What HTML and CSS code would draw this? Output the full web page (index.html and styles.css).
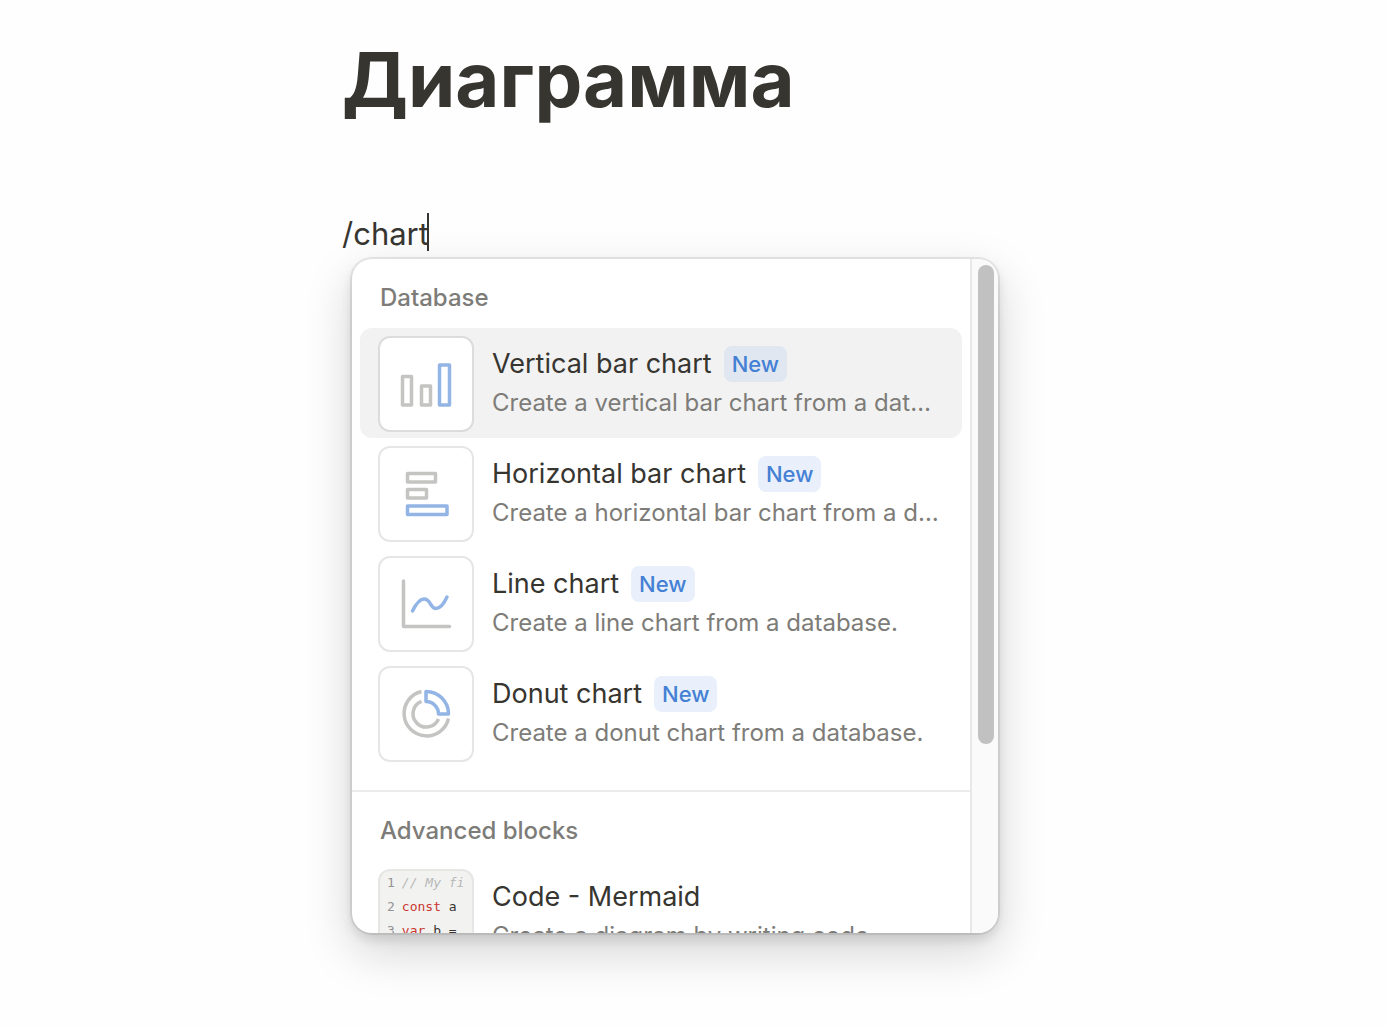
FILE: index.html
```html
<!DOCTYPE html>
<html lang="ru">
<head>
<meta charset="utf-8">
<meta name="viewport" content="width=device-width, initial-scale=1">
<title>Диаграмма</title>
<link rel="stylesheet" href="styles.css">
</head>
<body>
<main class="page">
  <h1 class="page-title">Диаграмма</h1>
  <input class="block-input" type="text" value="/chart" aria-label="Block text" spellcheck="false">
  <div class="menu">
    <div class="menu-list">
      <section class="group" aria-labelledby="group-database">
        <h2 class="group-title" id="group-database">Database</h2>
        <button class="item item-active" type="button">
          <span class="thumb">
            <svg class="icon" viewBox="0 0 92 92" aria-hidden="true">
              <g fill="none" stroke-width="3.500" stroke-linejoin="round">
                <path class="gray" d="M22.500 38.500h9v28.500h-9zM41.500 48h9v19h-9z"/>
                <path class="blue" d="M59.500 27h10v40h-10z"/>
              </g>
            </svg>
          </span>
          <span class="item-text">
            <span class="item-head"><span class="item-name">Vertical bar chart</span><span class="badge">New</span></span>
            <span class="item-desc">Create a vertical bar chart from a database.</span>
          </span>
        </button>
        <button class="item" type="button">
          <span class="thumb">
            <svg class="icon" viewBox="0 0 92 92" aria-hidden="true">
              <g fill="none" stroke-width="3.500" stroke-linejoin="round">
                <path class="gray" d="M27.500 25.500h28v8.500h-28zM27.500 41.500h19v8.500h-19z"/>
                <path class="blue" d="M27.500 58h39.500v8.500h-39.500z"/>
              </g>
            </svg>
          </span>
          <span class="item-text">
            <span class="item-head"><span class="item-name">Horizontal bar chart</span><span class="badge">New</span></span>
            <span class="item-desc">Create a horizontal bar chart from a database.</span>
          </span>
        </button>
        <button class="item" type="button">
          <span class="thumb">
            <svg class="icon" viewBox="0 0 92 92" aria-hidden="true">
              <g fill="none" stroke-width="3.500" stroke-linecap="round" stroke-linejoin="round">
                <path class="gray" d="M23.500 23v45.500h46"/>
                <path class="blue" d="M32.500 53c3-6 7-12 11.500-12 7 0 6 9.500 12 9.500 4.500 0 8-5 11-11.500"/>
              </g>
            </svg>
          </span>
          <span class="item-text">
            <span class="item-head"><span class="item-name">Line chart</span><span class="badge">New</span></span>
            <span class="item-desc">Create a line chart from a database.</span>
          </span>
        </button>
        <button class="item" type="button">
          <span class="thumb">
            <svg class="icon" viewBox="0 0 92 92" aria-hidden="true">
              <g fill="none" stroke-width="3.500">
                <path class="gray" d="M41.500 23.500A22.500 22.500 0 1 0 68.500 50.500M41.500 33.300A13.300 13.300 0 1 0 58.500 51"/>
                <path class="blue" stroke-linejoin="round" d="M46 23.500A22.500 22.500 0 0 1 68.500 46H58.500A12.500 12.500 0 0 0 46 33.500Z"/>
              </g>
            </svg>
          </span>
          <span class="item-text">
            <span class="item-head"><span class="item-name">Donut chart</span><span class="badge">New</span></span>
            <span class="item-desc">Create a donut chart from a database.</span>
          </span>
        </button>
      </section>
      <section class="group" aria-labelledby="group-advanced">
        <h2 class="group-title" id="group-advanced">Advanced blocks</h2>
        <button class="item" type="button">
          <span class="thumb thumb-code">
            <span class="code-line"><span class="line-no">1</span><span class="comment">// My fi</span></span>
            <span class="code-line"><span class="line-no">2</span><span><span class="keyword">const</span> a</span></span>
            <span class="code-line"><span class="line-no">3</span><span><span class="keyword">var</span> b =</span></span>
          </span>
          <span class="item-text">
            <span class="item-head"><span class="item-name">Code - Mermaid</span></span>
            <span class="item-desc">Create a diagram by writing code.</span>
          </span>
        </button>
      </section>
    </div>
    <div class="scrollbar"><div class="scrollbar-thumb"></div></div>
  </div>
</main>
</body>
</html>
```
FILE: styles.css
```css
* {
  box-sizing: border-box;
}

body {
  margin: 0;
  background: #fefefe;
  color: #373530;
  font-family: Inter, "Liberation Sans", sans-serif;
}

.page {
  max-width: 704px;
  min-height: 100vh;
  margin: 0 auto;
  padding: 29px 0 48px;
}

.page-title {
  margin: 0 0 84px;
  font-size: 76px;
  line-height: 100px;
  font-weight: 700;
}

.block-input {
  display: block;
  width: 87px;
  height: 38px;
  margin: 0 0 8px;
  padding: 2px 0 0;
  border: 0;
  border-right: 2px solid #373530;
  outline: 0;
  background: transparent;
  color: inherit;
  font: 400 31px/36px Inter, "Liberation Sans", sans-serif;
}

.menu {
  display: flex;
  height: 674px;
  max-width: 646px;
  margin-left: 10px;
  border-radius: 20px;
  overflow: hidden;
  background: #fff;
  box-shadow: 0 0 0 2px rgba(15, 15, 15, 0.08), 0 6px 12px rgba(15, 15, 15, 0.12), 0 18px 48px rgba(15, 15, 15, 0.18);
}

.menu-list {
  flex: 1;
  min-width: 0;
  overflow: hidden;
}

.group {
  padding: 0 8px 22px;
}

.group + .group {
  border-top: 2px solid #ebebea;
}

.group-title {
  margin: 0;
  padding: 25px 20px 16px;
  color: #7d7c78;
  font-size: 24px;
  line-height: 28px;
  font-weight: 500;
}

.item {
  display: flex;
  gap: 18px;
  width: 100%;
  padding: 8px 18px 6px;
  border: 0;
  border-radius: 12px;
  background: transparent;
  color: inherit;
  font-family: inherit;
  text-align: left;
}

.item-active {
  background: #f2f2f2;
}

.thumb {
  flex: none;
  width: 96px;
  height: 96px;
  border: 2px solid #e6e6e5;
  border-radius: 12px;
  overflow: hidden;
  background: #fff;
}

.item-active .thumb {
  border-color: #dcdcdb;
}

.icon {
  display: block;
  width: 92px;
  height: 92px;
}

.gray {
  stroke: #c4c4c2;
}

.blue {
  stroke: #92b5e5;
}

.thumb-code {
  padding: 0 4px 0 7px;
  background: #f2f2f1;
  font: 13px/24px "DejaVu Sans Mono", "Liberation Mono", monospace;
}

.code-line {
  display: flex;
  gap: 7px;
  white-space: pre;
}

.line-no {
  color: #949494;
}

.comment {
  color: #b8b8b8;
  font-style: italic;
}

.keyword {
  color: #c9372f;
}

.item-text {
  flex: 1;
  min-width: 0;
  padding-top: 10px;
}

.item-head {
  display: flex;
  align-items: center;
  gap: 12px;
  height: 36px;
}

.item-name {
  font-size: 27px;
  line-height: 36px;
}

.badge {
  padding: 0 8px;
  border-radius: 8px;
  background: #e9f0fb;
  color: #4480d4;
  font-size: 22px;
  line-height: 36px;
  font-weight: 500;
}

.item-active .badge {
  background: #e1e7f1;
}

.item-desc {
  display: block;
  overflow: hidden;
  padding-top: 4px;
  color: #7d7c78;
  font-size: 24px;
  line-height: 34px;
  white-space: nowrap;
  text-overflow: ellipsis;
}

.scrollbar {
  flex: none;
  width: 28px;
  padding: 6px 4px 0 6px;
  border-left: 2px solid #e8e8e8;
  background: #fafafa;
}

.scrollbar-thumb {
  width: 16px;
  height: 479px;
  border-radius: 8px;
  background: #c1c1c1;
}
```
